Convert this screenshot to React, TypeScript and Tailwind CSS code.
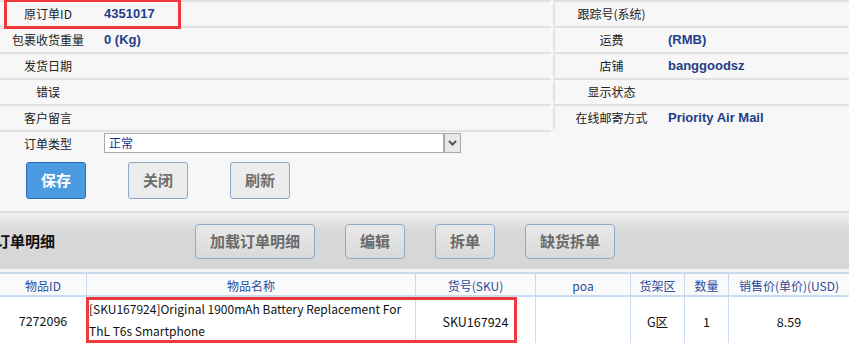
import React from 'react';

const leftRows = [
  { label: '原订单ID', value: '4351017' },
  { label: '包裹收货重量', value: '0 (Kg)' },
  { label: '发货日期', value: '' },
  { label: '错误', value: '' },
  { label: '客户留言', value: '' },
];

const rightRows = [
  { label: '跟踪号(系统)', value: '' },
  { label: '运费', value: '(RMB)' },
  { label: '店铺', value: 'banggoodsz' },
  { label: '显示状态', value: '' },
  { label: '在线邮寄方式', value: 'Priority Air Mail' },
];

const cols = [
  { title: '物品ID', w: 'w-[86px]' },
  { title: '物品名称', w: 'w-[329px]' },
  { title: '货号(SKU)', w: 'w-[120px]' },
  { title: 'poa', w: 'w-[95px]' },
  { title: '货架区', w: 'w-[54px]' },
  { title: '数量', w: 'w-[44px]' },
  { title: '销售价(单价)(USD)', w: 'flex-1' },
];

const cjk = "font-['Noto_Sans_CJK_SC',sans-serif]";
const val = "font-['Liberation_Sans','Noto_Sans_CJK_SC',sans-serif] font-bold text-[13px] text-[#233d8b]";

function GrayButton({ label, w }: { label: string; w: string }) {
  return (
    <button className={`${w} h-[35px] rounded-[4px] border border-[#8eaacb] bg-gradient-to-b from-[#e9e9e9] to-[#d9d9d9] text-[15px] font-bold text-[#6a6a6a]`}>
      {label}
    </button>
  );
}

export default function App() {
  return (
    <div className={`relative h-[343px] w-[849px] overflow-hidden bg-[#f7f7f7] text-[12px] text-[#222] ${cjk}`}>
      {/* form */}
      <div className="flex">
        <div className="w-[551px]">
          {leftRows.map((r) => (
            <div key={r.label} className="flex h-[26px] items-center border-t-2 border-[#e1e1e1]">
              <div className="w-[96px] text-center">{r.label}</div>
              <div className={`pl-[8px] ${val}`}>{r.value}</div>
            </div>
          ))}
          <div className="flex h-[26px] items-start border-t-2 border-[#e1e1e1] pt-[1px]">
            <div className="w-[96px] pt-[2px] text-center">订单类型</div>
            <div className="ml-[8px] flex h-[20px] w-[357px] border border-[#a9a9a9] bg-white">
              <div className="flex-1 pl-[4px] leading-[18px] text-[#1a2f8a]">正常</div>
              <div className="flex w-[17px] items-center justify-center border-l-2 border-[#a9a9a9] bg-[#e8e8e8]">
                <svg width="9" height="6" viewBox="0 0 9 6">
                  <path d="M1 1 L4.5 4.5 L8 1" fill="none" stroke="#555" strokeWidth="2" />
                </svg>
              </div>
            </div>
          </div>
        </div>
        <div className="ml-[2px] flex-1">
          {rightRows.map((r) => (
            <div key={r.label} className="flex h-[26px] border-t-2 border-[#e1e1e1]">
              <div className="my-[1px] flex w-[115px] items-center justify-center border-l-2 border-[#e1e1e1]">{r.label}</div>
              <div className={`flex items-center ${val}`}>{r.value}</div>
            </div>
          ))}
        </div>
      </div>

      {/* action buttons */}
      <div className="mt-[6px] flex gap-[42px] pl-[26px]">
        <button className="h-[37px] w-[60px] rounded-[3px] border border-[#2c68b4] bg-[#4a9be0] text-[15px] font-bold text-white">保存</button>
        <button className="h-[37px] w-[60px] rounded-[3px] border border-[#8eaacb] bg-[#ececec] text-[15px] font-bold text-[#6e6e6e]">关闭</button>
        <button className="h-[37px] w-[60px] rounded-[3px] border border-[#8eaacb] bg-[#ececec] text-[15px] font-bold text-[#6e6e6e]">刷新</button>
      </div>

      {/* toolbar */}
      <div className="mt-[12px] flex h-[58px] items-center border-t-2 border-[#dedede] bg-gradient-to-b from-[#f2f2f2] via-[#d9d9d9] via-30% to-[#d6d6d6]">
        <div className="ml-[-5px] w-[200px] text-[15px] font-bold text-[#111]">订单明细</div>
        <div className="flex gap-[30px]">
          <GrayButton label="加载订单明细" w="w-[120px]" />
          <GrayButton label="编辑" w="w-[60px]" />
          <GrayButton label="拆单" w="w-[60px]" />
          <GrayButton label="缺货拆单" w="w-[90px]" />
        </div>
      </div>

      {/* table */}
      <div className="mt-[3px] bg-white">
        <div className="flex h-[25px] border-y-2 border-[#c9dbef] bg-[#fafafa]">
          {cols.map((c, i) => (
            <div key={c.title} className={`${c.w} flex items-center justify-center pt-[2px] text-[#2a4c9c] ${i > 0 ? 'border-l border-[#c9dbef]' : ''}`}>
              {c.title}
            </div>
          ))}
        </div>
        <div className="flex h-[46px] text-[12.5px] text-[#111]">
          <div className="flex w-[86px] items-center justify-center pt-[3px]">7272096</div>
          <div className="w-[329px] border-l border-[#c9dbef] pl-[2px] pt-[1px] text-[12px] leading-[22px]">
            [SKU167924]Original 1900mAh Battery Replacement For ThL T6s Smartphone
          </div>
          <div className="flex w-[120px] items-center justify-center border-l border-[#c9dbef] pt-[4px]">SKU167924</div>
          <div className="w-[95px] border-l border-[#c9dbef]" />
          <div className="flex w-[54px] items-center justify-center border-l border-[#c9dbef] pt-[4px]">G区</div>
          <div className="flex w-[44px] items-center justify-center border-l border-[#c9dbef] pt-[4px]">1</div>
          <div className="flex flex-1 items-center justify-center border-l border-[#c9dbef] pt-[4px]">8.59</div>
        </div>
      </div>

      {/* annotation boxes */}
      <div className="pointer-events-none absolute left-[4px] top-[-1px] h-[30px] w-[177px] border-[3px] border-[#ef3a3d]" />
      <div className="pointer-events-none absolute left-[86px] top-[297px] h-[46px] w-[431px] border-[3px] border-[#ef3a3d]" />
    </div>
  );
}
